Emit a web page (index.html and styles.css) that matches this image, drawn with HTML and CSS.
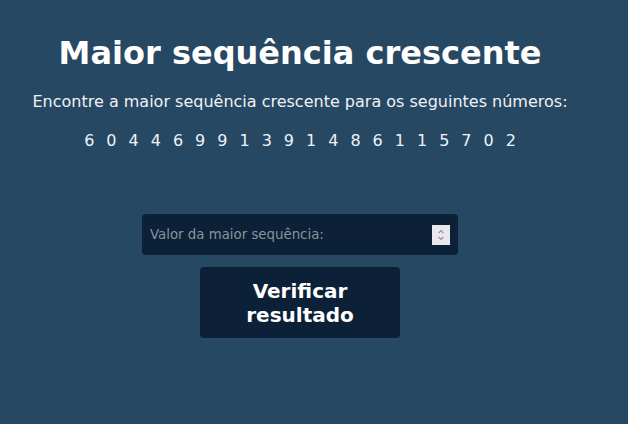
FILE: index.html
```html
<!DOCTYPE html>
<html lang="pt">
<head>
<meta charset="utf-8">
<title>Maior sequência crescente</title>
<link rel="stylesheet" href="styles.css">
</head>
<body>
<main class="app">
  <h1 class="title">Maior sequência crescente</h1>
  <p class="subtitle">Encontre a maior sequência crescente para os seguintes números:</p>
  <div class="numbers">
    <span>6</span><span>0</span><span>4</span><span>4</span><span>6</span><span>9</span><span>9</span><span>1</span><span>3</span><span>9</span><span>1</span><span>4</span><span>8</span><span>6</span><span>1</span><span>1</span><span>5</span><span>7</span><span>0</span><span>2</span>
  </div>
  <div class="field">
    <input class="answer" type="number" placeholder="Valor da maior sequência:">
    <span class="spinner" aria-hidden="true">
      <svg width="18" height="20" viewBox="0 0 18 20">
        <path d="M6.5 8.2 L9 5.7 L11.5 8.2" fill="none" stroke="#8f8f9d" stroke-width="1.2"/>
        <path d="M6.5 11.8 L9 14.3 L11.5 11.8" fill="none" stroke="#8f8f9d" stroke-width="1.2"/>
      </svg>
    </span>
  </div>
  <button class="verify" type="button">Verificar resultado</button>
</main>
</body>
</html>
```
FILE: styles.css
```css
html, body {
  margin: 0;
  padding: 0;
  background: #264863;
  height: 100%;
}
body {
  font-family: "DejaVu Sans", sans-serif;
  color: #ffffff;
}
.app {
  width: 600px;
  display: flex;
  flex-direction: column;
  align-items: center;
  padding-top: 35px;
}
.title {
  margin: 0;
  font-size: 32px;
  font-weight: bold;
  line-height: 37px;
}
.subtitle {
  margin: 20px 0 0;
  font-size: 16px;
  line-height: 19px;
  color: #eef2f6;
}
.numbers {
  margin-top: 20px;
  display: flex;
  gap: 12px;
  font-size: 16px;
  line-height: 19px;
  color: #eef2f6;
}
.field {
  position: relative;
  margin-top: 64px;
  width: 316px;
  height: 41px;
}
.answer {
  display: block;
  width: 100%;
  height: 41px;
  box-sizing: border-box;
  border: none;
  border-radius: 4px;
  background: #0c2137;
  color: #ffffff;
  padding: 0 8px;
  font-family: "DejaVu Sans", sans-serif;
  font-size: 13.333px;
  outline: none;
  -moz-appearance: textfield;
}
.answer::placeholder {
  color: #8a939b;
}
.answer::-webkit-inner-spin-button,
.answer::-webkit-outer-spin-button {
  -webkit-appearance: none;
  margin: 0;
}
.spinner {
  position: absolute;
  right: 8px;
  top: 11px;
  width: 18px;
  height: 20px;
  background: #e9e9ed;
  display: block;
}
.spinner svg {
  display: block;
}
.verify {
  margin-top: 12px;
  width: 200px;
  height: 71px;
  border: none;
  border-radius: 4px;
  background: #0c2137;
  color: #ffffff;
  font-family: "DejaVu Sans", sans-serif;
  font-size: 20px;
  font-weight: bold;
  line-height: 24px;
  padding: 0 24px;
}
```
